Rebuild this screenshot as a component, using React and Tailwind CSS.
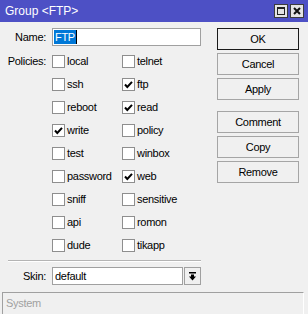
import React from 'react';

const policies = [
    ['local', false, 'telnet', false],
    ['ssh', false, 'ftp', true],
    ['reboot', false, 'read', true],
    ['write', true, 'policy', false],
    ['test', false, 'winbox', false],
    ['password', false, 'web', true],
    ['sniff', false, 'sensitive', false],
    ['api', false, 'romon', false],
    ['dude', false, 'tikapp', false],
];

const CheckBox = ({ label, checked }) => (
    <div className="flex items-center h-[23px]">
        <div className="w-[13px] h-[13px] bg-white border border-[#8e8e8e] flex items-center justify-center">
            {checked && (
                <svg width="11" height="11" viewBox="0 0 11 11">
                    <path d="M2 5.5 L4.3 8 L9 2.8" fill="none" stroke="#000" strokeWidth="2" />
                </svg>
            )}
        </div>
        <span className="ml-[2px]">{label}</span>
    </div>
);

const Button = ({ children, main }) => (
    <button
        className={`h-[22px] w-full bg-[#f0f0f0] border ${main ? 'border-[#1a1a1a]' : 'border-[#a5a5a5]'} flex items-center justify-center`}
    >
        {children}
    </button>
);

const App = () => {
    return (
        <div className="w-[308px] h-[314px] bg-[#f0f0f0] flex flex-col overflow-hidden font-['Liberation_Sans',Arial,sans-serif] text-[11px] tracking-[-0.3px] text-black leading-none">
            {/* title bar */}
            <div className="h-[22px] shrink-0 bg-[#4d50c5] flex items-center pl-[5px] pr-[4px]">
                <span className="text-white text-[12px] tracking-normal">Group &lt;FTP&gt;</span>
                <div className="ml-auto flex gap-[2px]">
                    <div className="w-[14px] h-[14px] bg-[#e4e4e4] border border-[#3c3c3c] flex items-center justify-center">
                        <div className="w-[8px] h-[8px] border border-[#222] border-t-2" />
                    </div>
                    <div className="w-[14px] h-[14px] bg-[#e4e4e4] border border-[#3c3c3c] flex items-center justify-center">
                        <svg width="8" height="8" viewBox="0 0 8 8">
                            <path d="M1 1 L7 7 M7 1 L1 7" stroke="#111" strokeWidth="2" />
                        </svg>
                    </div>
                </div>
            </div>

            <div className="flex pt-[6px]">
                <div className="w-[201px]">
                    <div className="flex items-center h-[18px]">
                        <div className="w-[46px] text-right">Name:</div>
                        <div className="ml-[6px] w-[149px] h-[18px] bg-white border border-[#a0a0a0] flex items-center pl-[1px]">
                            <span className="bg-[#0078d7] text-white px-[1px] h-[14px] flex items-center">FTP</span>
                            <span className="w-px h-[14px] bg-black" />
                        </div>
                    </div>
                    <div className="flex mt-[4px]">
                        <div className="w-[46px] h-[23px] flex items-center justify-end">Policies:</div>
                        <div className="ml-[6px] grid grid-cols-[70px_79px]">
                            {policies.map(([a, ac, b, bc]) => (
                                <React.Fragment key={a}>
                                    <CheckBox label={a} checked={ac} />
                                    <CheckBox label={b} checked={bc} />
                                </React.Fragment>
                            ))}
                        </div>
                    </div>
                </div>
                <div className="ml-[16px] w-[82px] flex flex-col gap-[3px]">
                    <Button main>OK</Button>
                    <Button>Cancel</Button>
                    <Button>Apply</Button>
                    <div className="mt-[8px] flex flex-col gap-[3px]">
                        <Button>Comment</Button>
                        <Button>Copy</Button>
                        <Button>Remove</Button>
                    </div>
                </div>
            </div>

            <div className="mt-[3px] ml-[8px] w-[193px] border-t border-[#b4b4b4] border-b border-b-white" />

            <div className="flex items-center mt-[5px]">
                <div className="w-[46px] text-right">Skin:</div>
                <div className="ml-[6px] w-[131px] h-[18px] bg-white border border-[#a0a0a0] flex items-center pl-[2px]">default</div>
                <div className="ml-[1px] w-[17px] h-[18px] bg-[#f0f0f0] border border-[#a0a0a0] flex items-center justify-center">
                    <svg width="9" height="9" viewBox="0 0 9 9">
                        <rect x="1" y="0" width="7" height="1.5" fill="#000" />
                        <path d="M3 2.5 H6 V4.5 H8 L4.5 8.5 L1 4.5 H3 Z" fill="#000" />
                    </svg>
                </div>
            </div>

            <div className="mt-[7px] ml-[2px] mr-[4px] flex-1 border-t border-l border-[#a0a0a0] border-r border-r-white pl-[3px] pt-[5px] text-[#a0a0a0]">
                System
            </div>
        </div>
    );
};

export default App;
